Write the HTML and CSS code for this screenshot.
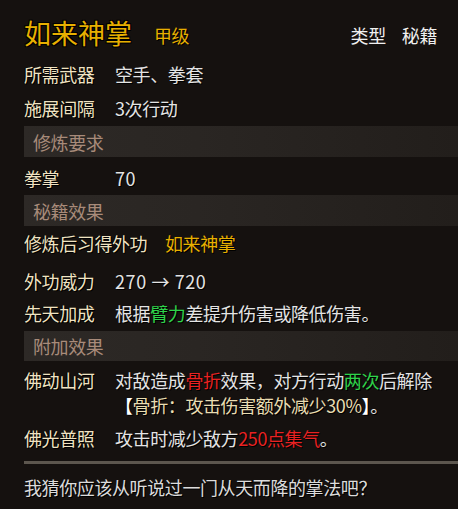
FILE: index.html
```html
<!DOCTYPE html>
<html lang="zh">
<head>
<meta charset="utf-8">
<link rel="stylesheet" href="styles.css">
</head>
<body>
<div class="panel">
  <div class="title-row">
    <span class="title">如来神掌</span>
    <span class="grade">甲级</span>
    <span class="type">类型<span class="type-val">秘籍</span></span>
  </div>

  <div class="row r-first"><span class="label">所需武器</span><span class="val">空手、拳套</span></div>
  <div class="row"><span class="label">施展间隔</span><span class="val">3次行动</span></div>

  <div class="section s1">修炼要求</div>
  <div class="row r-after-sec"><span class="label">拳掌</span><span class="val num">70</span></div>

  <div class="section">秘籍效果</div>
  <div class="row"><span class="label wide">修炼后习得外功</span><span class="val gold">如来神掌</span></div>
  <div class="row r-after-sec"><span class="label">外功威力</span><span class="val num">270 → 720</span></div>
  <div class="row r-short"><span class="label">先天加成</span><span class="val">根据<span class="green">臂力</span>差提升伤害或降低伤害。</span></div>

  <div class="section s3">附加效果</div>
  <div class="row r-mid"><span class="label">佛动山河</span><span class="val">对敌造成<span class="red">骨折</span>效果，对方行动<span class="green">两次</span>后解除</span></div>
  <div class="row r-sub"><span class="val sub"><span class="br">【</span><span class="cream">骨折：攻击伤害额外减少30%</span><span class="br">】</span>。</span></div>
  <div class="row r-gap"><span class="label">佛光普照</span><span class="val">攻击时减少敌方<span class="red">250点集气</span>。</span></div>

  <div class="divider"></div>
  <div class="footer">我猜你应该从听说过一门从天而降的掌法吧？</div>
</div>
</body>
</html>
```

FILE: styles.css
```css
html, body {
  margin: 0;
  padding: 0;
  background: #15110f;
}
body {
  width: 458px;
  height: 509px;
  overflow: hidden;
  font-family: "Noto Sans CJK SC", "Noto Sans", sans-serif;
  font-size: 18px;
  letter-spacing: -0.4px;
  color: #e2e2e2;
}
.panel {
  padding-left: 24px;
  padding-top: 16px;
}
.title-row {
  height: 34px;
  display: flex;
  align-items: center;
}
.title {
  font-size: 27px;
  letter-spacing: 0;
  color: #e8b000;
  text-shadow: 1px 1px 0 #000, -1px -1px 0 #000, 1px -1px 0 #000, -1px 1px 0 #000;
  line-height: 34px;
}
.grade {
  margin-left: 22px;
  color: #e8b000;
  text-shadow: 1px 1px 0 #000;
  position: relative;
  top: 2px;
}
.type {
  margin-left: auto;
  margin-right: 21px;
  color: #f0f0f0;
  position: relative;
  top: 2px;
}
.type-val {
  margin-left: 16px;
}
.row {
  height: 34px;
  display: flex;
  align-items: center;
  white-space: nowrap;
}
.r-first { margin-top: 7px; }
.r-after-sec { margin-top: 4px; }
.r-short { height: 30px; }
.r-mid { margin-top: 4px; height: 30px; }
.r-sub { height: 20px; }
.r-gap { margin-top: 6px; }
.label {
  width: 91px;
  flex: none;
  color: #f0e3c2;
  text-shadow: 1px 1px 0 #000, -1px 0 0 #000;
}
.label.wide {
  width: 141px;
}
.val {
  color: #e4e4e4;
  text-shadow: 1px 1px 0 #000;
}
.num {
  margin-left: 0;
  letter-spacing: 0.6px;
}
.gold { color: #e8b000; }
.green { color: #2ed34a; }
.red { color: #e82222; }
.cream { color: #e9ddb2; }
.br { color: #ffffff; }
.sub {
  margin-left: 91px;
}
.section {
  height: 31px;
  margin-top: 0;
  padding-left: 9px;
  display: flex;
  align-items: center;
  color: #a88b7a;
  background: linear-gradient(90deg, #2d2926 0%, #2a2623 40%, #221e1b 100%);
}
.s1 { margin-top: 1px; }
.s3 { margin-top: 3px; height: 30px; }
.divider {
  margin-top: 6px;
  height: 3px;
  background: #5c564e;
}
.footer {
  margin-top: 6px;
  height: 34px;
  line-height: 34px;
  color: #dcdcdc;
  text-shadow: 1px 1px 0 #000;
}
```
